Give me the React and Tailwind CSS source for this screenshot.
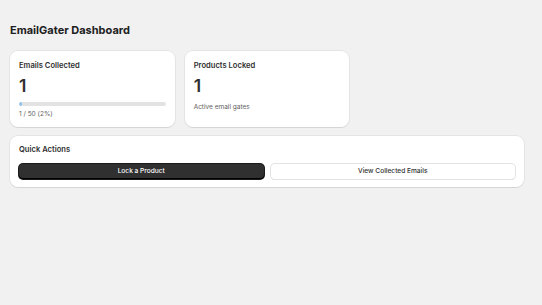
import React from 'react';

const Card = ({ className = '', children }) => (
  <div
    className={`bg-white rounded-[8px] shadow-[0_1px_0_0_rgba(26,26,26,0.07),0_0_0_1px_rgba(0,0,0,0.05)] ${className}`}
  >
    {children}
  </div>
);

export default function App() {
  const collected = 1;
  const limit = 50;
  const pct = Math.round((collected / limit) * 100);

  return (
    <div
      className="min-h-screen bg-[#f1f1f1] text-[#303030] pl-[10px] pr-[18px] pt-[23px]"
      style={{ fontFamily: 'Inter, "Noto Sans", sans-serif' }}
    >
      <h1 className="text-[11px] leading-[14px] font-bold text-[#202020] mb-[14px]">
        EmailGater Dashboard
      </h1>

      <div className="grid grid-cols-3 gap-[10px] mb-[9px]">
        <Card className="px-[9px] pt-[10px] pb-[8px]">
          <h2 className="text-[7.6px] leading-[10px] font-semibold">Emails Collected</h2>
          <div className="text-[17.5px] leading-[21px] font-semibold mt-[4px]">{collected}</div>
          <div className="mt-[6px] h-[4px] rounded-full bg-[#e3e3e3] overflow-hidden">
            <div className="h-full bg-[#91c3ee] rounded-full" style={{ width: `${pct}%` }} />
          </div>
          <p className="text-[6.5px] leading-[9px] text-[#616161] mt-[3.5px]">
            {collected} / {limit} ({pct}%)
          </p>
        </Card>

        <Card className="px-[9px] pt-[10px] pb-[8px]">
          <h2 className="text-[7.6px] leading-[10px] font-semibold">Products Locked</h2>
          <div className="text-[17.5px] leading-[21px] font-semibold mt-[4px]">1</div>
          <p className="text-[6.5px] leading-[9px] text-[#616161] mt-[7px]">Active email gates</p>
        </Card>
      </div>

      <Card className="px-[9px] pt-[9.5px] pb-[8px]">
        <h2 className="text-[7.6px] leading-[10px] font-semibold">Quick Actions</h2>
        <div className="flex gap-[7px] mt-[9px]">
          <button className="flex-1 h-[15px] rounded-[4px] bg-[#303030] text-white text-[6.6px] font-medium shadow-[inset_0_-1px_0_#000,0_0_0_1px_#1a1a1a]">
            Lock a Product
          </button>
          <button className="flex-1 h-[15px] rounded-[4px] bg-white text-[#303030] text-[6.6px] font-medium shadow-[0_0_0_1px_#e3e3e3,0_1px_0_#d4d4d4]">
            View Collected Emails
          </button>
        </div>
      </Card>
    </div>
  );
}
